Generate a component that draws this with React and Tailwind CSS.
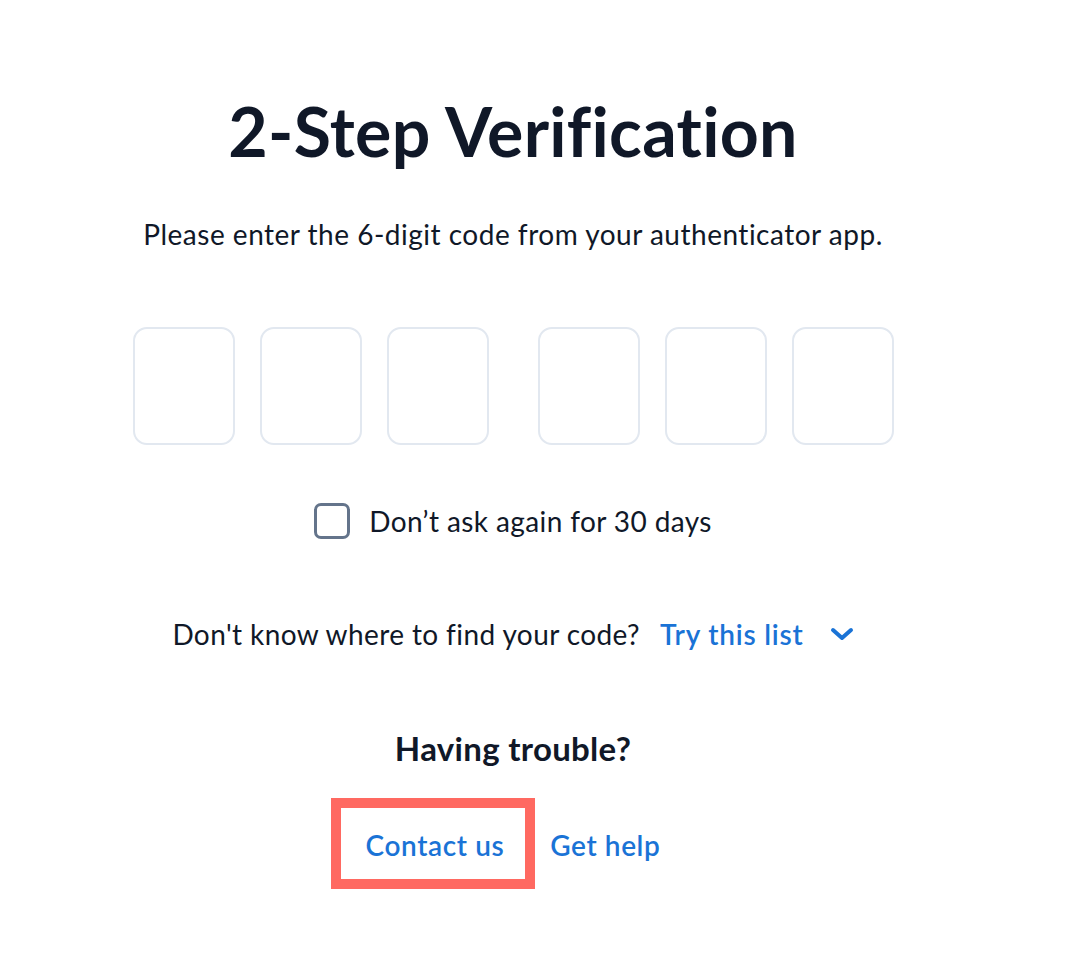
import React from "react";

function CodeBox() {
  return (
    <input
      type="text"
      maxLength={1}
      className="h-[118px] w-[102px] rounded-[14px] border-2 border-[#e2e8f0] bg-white text-center text-4xl outline-none"
    />
  );
}

export default function App() {
  return (
    <div
      className="min-h-[966px] w-[1026px] bg-white text-[#101828]"
      style={{ fontFamily: "Lato, 'Noto Sans', sans-serif" }}
    >
      <div className="flex flex-col items-center pt-[91px]">
        <h1 className="text-[68px] font-bold leading-[80px] tracking-[0.3px]">
          2-Step Verification
        </h1>

        <p className="mt-[45px] text-[28px] leading-[36px] tracking-[0.5px]">
          Please enter the 6-digit code from your authenticator app.
        </p>

        <div className="mt-[75px] flex items-center">
          <div className="flex gap-[25px]">
            <CodeBox />
            <CodeBox />
            <CodeBox />
          </div>
          <div className="ml-[49px] flex gap-[25px]">
            <CodeBox />
            <CodeBox />
            <CodeBox />
          </div>
        </div>

        <label className="mt-[58px] flex h-[36px] items-center gap-[19px]">
          <span className="h-[36px] w-[36px] rounded-[7px] border-[3.5px] border-[#64748b]"></span>
          <span className="text-[28px] leading-[36px] tracking-[0.4px]">Don’t ask again for 30 days</span>
        </label>

        <div className="mt-[77px] flex h-[36px] items-center">
          <span className="text-[28px] leading-[36px] tracking-[0.4px]">Don't know where to find your code?</span>
          <button className="ml-[20px] flex items-center text-[28px] font-semibold leading-[36px] tracking-[0.8px] text-[#1a73d6]">
            Try this list
            <svg
              className="ml-[26px]"
              width="24"
              height="16"
              viewBox="0 0 24 16"
              fill="none"
              stroke="#1a73d6"
              strokeWidth="4"
              strokeLinecap="round"
              strokeLinejoin="round"
            >
              <path d="M3 4l9 8 9-8" />
            </svg>
          </button>
        </div>

        <h2 className="mt-[78px] text-[33px] font-bold leading-[36px] tracking-[0.3px]">Having trouble?</h2>

        <div className="mt-[61px] flex h-[36px] items-center gap-[46px] text-[28px] font-semibold leading-[36px] tracking-[0.6px] text-[#1a73d6]">
          <span className="relative">
            Contact us
            <span className="pointer-events-none absolute -left-[35px] -right-[31px] -top-[29px] -bottom-[26px] border-[10px] border-[#ff6961]"></span>
          </span>
          <span>Get help</span>
        </div>
      </div>
    </div>
  );
}
